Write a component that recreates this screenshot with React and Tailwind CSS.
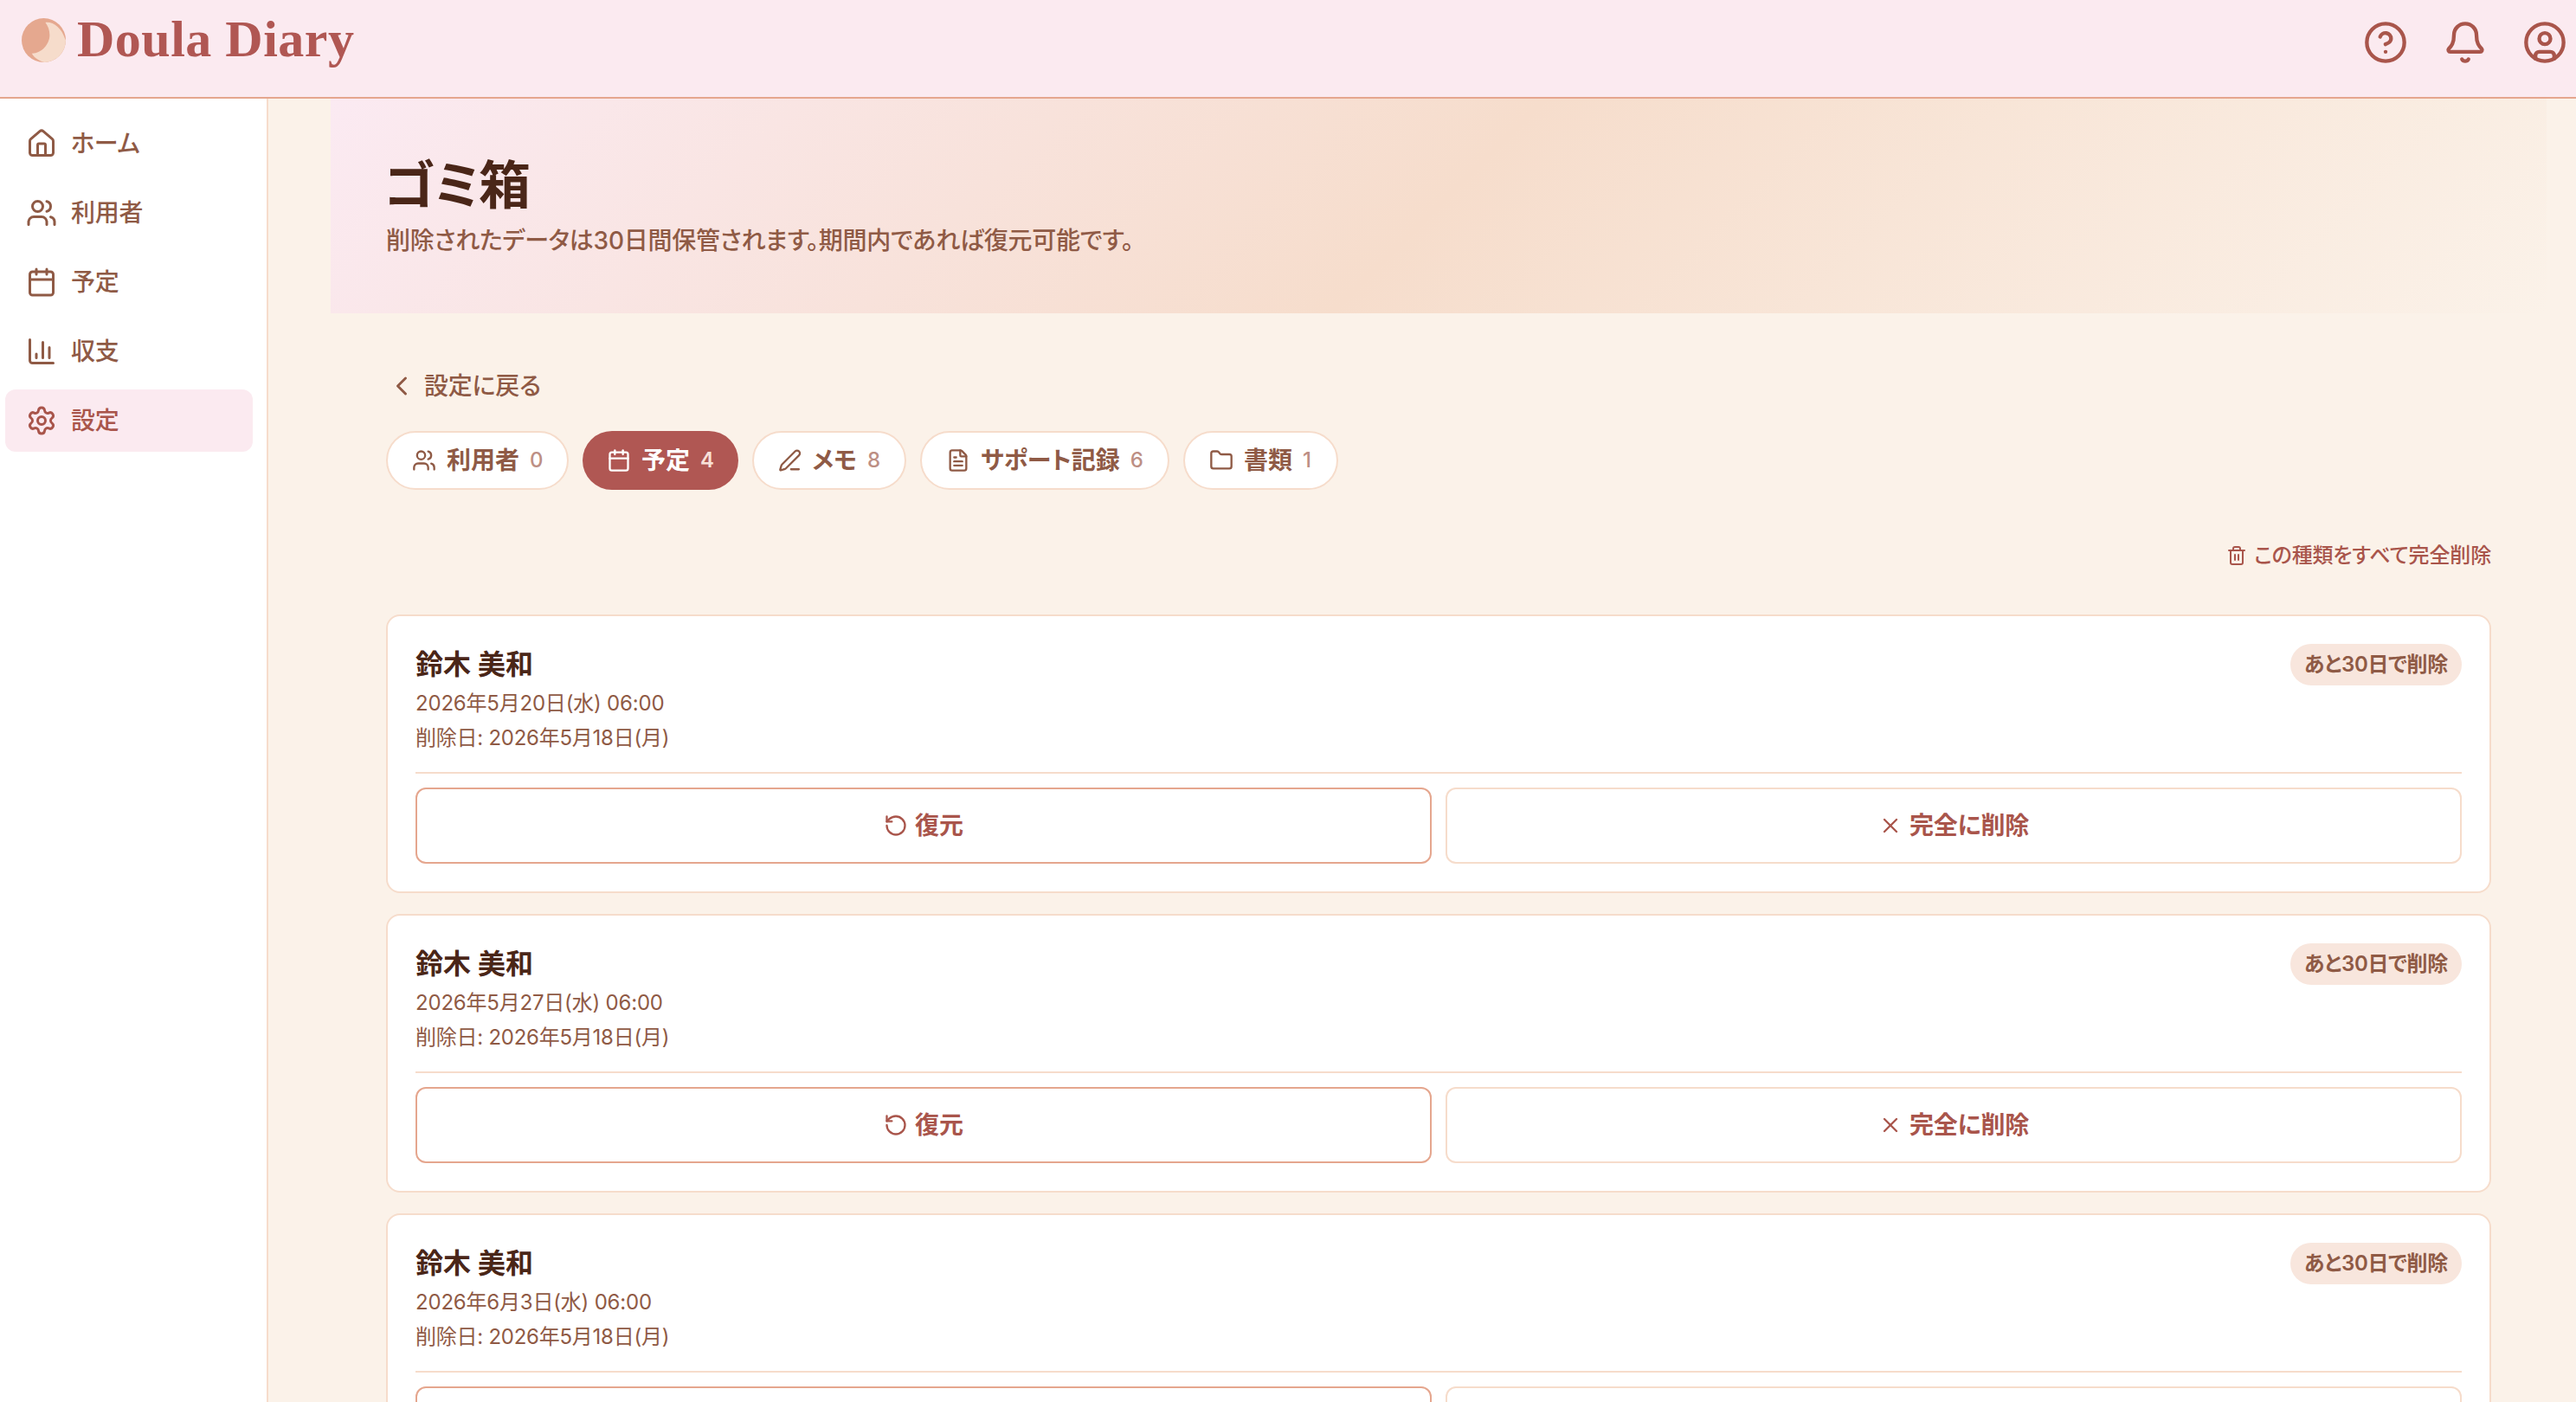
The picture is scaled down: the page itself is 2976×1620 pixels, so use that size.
import {
  Bell,
  Calendar,
  ChevronLeft,
  CircleQuestionMark,
  CircleUser,
  FileText,
  Folder,
  House,
  RotateCcw,
  Settings,
  Trash2,
  Users,
  X,
} from "lucide-react";

const navItems = [
  { label: "ホーム", icon: House },
  { label: "利用者", icon: Users },
  { label: "予定", icon: Calendar },
  { label: "収支", icon: ChartIcon },
  { label: "設定", icon: Settings, active: true },
];

const tabs = [
  { label: "利用者", count: 0, icon: Users, width: "w-[211px]" },
  { label: "予定", count: 4, icon: Calendar, width: "w-[180px]", active: true },
  { label: "メモ", count: 8, icon: PenIcon, width: "w-[178px]" },
  { label: "サポート記録", count: 6, icon: FileText, width: "w-[288px]" },
  { label: "書類", count: 1, icon: Folder, width: "w-[179px]" },
];

const items = [
  { id: 1, name: "鈴木 美和", date: "2026年5月20日(水) 06:00", deletedAt: "2026年5月18日(月)" },
  { id: 2, name: "鈴木 美和", date: "2026年5月27日(水) 06:00", deletedAt: "2026年5月18日(月)" },
  { id: 3, name: "鈴木 美和", date: "2026年6月3日(水) 06:00", deletedAt: "2026年5月18日(月)" },
];

function ChartIcon({ size }) {
  return (
    <svg width={size} height={size} viewBox="0 0 24 24" fill="none" stroke="currentColor" strokeWidth="2" strokeLinecap="round" strokeLinejoin="round">
      <path d="M3 3v16a2 2 0 0 0 2 2h16" />
      <path d="M8 17v-3M13 17V5M18 17V9" />
    </svg>
  );
}

function PenIcon({ size }) {
  return (
    <svg width={size} height={size} viewBox="0 0 24 24" fill="none" stroke="currentColor" strokeWidth="2" strokeLinecap="round" strokeLinejoin="round">
      <path d="M13 21h8" />
      <path d="M21.174 6.812a1 1 0 0 0-3.986-3.987L3.842 16.174a2 2 0 0 0-.5.83l-1.321 4.352a.5.5 0 0 0 .623.622l4.353-1.32a2 2 0 0 0 .83-.497z" />
    </svg>
  );
}

function Logo() {
  return (
    <svg width="51" height="51" viewBox="0 0 52 52">
      <circle cx="26" cy="26" r="26" fill="#e5a88f" />
      <path d="M28 5C38 4 47 12 51 24L52 26A26 26 0 0 1 27 52C21 50.500 15 47 12 41.500C23 42 33 31 33 20C33 14 31 9 28 5Z" fill="#f6dccb" />
    </svg>
  );
}

function Header() {
  return (
    <header className="flex h-[114px] items-start justify-between border-b-2 border-[#e5a68e] bg-[#fbeaf0] pr-[10px] pl-[25px]">
      <div className="flex items-start gap-[13px] pt-[21px]">
        <Logo />
        <span className="-mt-[10px] font-['Liberation_Serif',serif] text-[60px] leading-[68px] font-bold tracking-[0.5px] text-[#b05753]">
          Doula Diary
        </span>
      </div>
      <div className="flex gap-10 pt-[23px] text-[#a9554b]">
        <CircleQuestionMark size={52} />
        <Bell size={52} />
        <CircleUser size={52} />
      </div>
    </header>
  );
}

function Sidebar() {
  return (
    <aside className="w-[310px] shrink-0 border-r-2 border-[#f6dccb] bg-white pt-4 pr-4 pl-[6px]">
      <nav className="flex flex-col gap-2">
        {navItems.map(({ label, icon: Icon, active }) => (
          <a
            key={label}
            className={`flex h-[72px] items-center gap-4 rounded-xl px-6 text-[28px] font-medium tracking-[-0.2px] ${
              active ? "bg-[#fbeaf0] text-[#a9554b]" : "text-[#8f5a45]"
            }`}
          >
            <Icon size={36} />
            <span>{label}</span>
          </a>
        ))}
      </nav>
    </aside>
  );
}

function TrashCard({ item }) {
  return (
    <div className="h-[322px] shrink-0 rounded-2xl border-2 border-[#f6dccb] bg-white p-8">
      <div className="flex h-[148px] items-start justify-between">
        <div>
          <h3 className="mb-px text-[32px] leading-[48px] font-semibold text-[#4a2618]">{item.name}</h3>
          <p className="text-[24px] leading-[40px] tracking-[-0.2px] text-[#8f5a45]">{item.date}</p>
          <p className="text-[24px] leading-[40px] tracking-[-0.25px] text-[#8f5a45]">削除日: {item.deletedAt}</p>
        </div>
        <span className="flex h-12 items-center rounded-full bg-[#f8e6dd] px-4 text-[24px] font-semibold tracking-[-0.3px] text-[#8f5a45]">
          あと30日で削除
        </span>
      </div>
      <div className="grid grid-cols-2 gap-4 border-t-2 border-[#f6dccb] pt-4 text-[28px] font-semibold text-[#a9554b]">
        <button type="button" className="flex h-[88px] items-center justify-center gap-2 rounded-xl border-2 border-[#e5a68e]">
          <RotateCcw size={28} />
          復元
        </button>
        <button type="button" className="flex h-[88px] items-center justify-center gap-2 rounded-xl border-2 border-[#f6dccb]">
          <X size={28} />
          <span className="tracking-[-0.2px]">完全に削除</span>
        </button>
      </div>
    </div>
  );
}

export default function App() {
  return (
    <div className="flex h-[1620px] w-[2976px] flex-col overflow-hidden bg-[#fbf2e9] font-[Inter,'Noto_Sans_CJK_JP',sans-serif] [font-feature-settings:'palt']">
      <Header />
      <div className="flex min-h-0 flex-1">
        <Sidebar />
        <main className="flex-1 overflow-hidden pr-[34px] pl-[72px]">
          <section className="h-[248px] bg-linear-[135deg,#fbeaf2,#f6ddcc_50%,#fbf2e9] px-16 pt-16">
            <h1 className="-ml-[3px] text-[60px] leading-[72px] font-bold tracking-[-1.5px] text-[#4a2618]">ゴミ箱</h1>
            <p className="mt-2 text-[28px] leading-[40px] font-medium tracking-[-0.26px] text-[#8f5a45]">
              削除されたデータは30日間保管されます。期間内であれば復元可能です。
            </p>
          </section>

          <div className="flex flex-col px-16 pt-16">
            <button type="button" className="flex h-10 items-center gap-2 text-[28px] font-medium tracking-[-0.2px] text-[#8f5a45]">
              <ChevronLeft size={36} />
              設定に戻る
            </button>

            <div className="mt-8 flex gap-4">
              {tabs.map(({ label, count, icon: Icon, width, active }) => (
                <button
                  key={label}
                  type="button"
                  className={`flex h-[68px] items-center gap-3 rounded-full px-7 text-[28px] font-semibold whitespace-nowrap ${width} ${
                    active ? "bg-[#b05753] text-white" : "border-2 border-[#f6dccb] bg-white text-[#8f5a45]"
                  }`}
                >
                  <Icon size={28} className="shrink-0" />
                  <span>{label}</span>
                  <span className={`text-[24px] ${active ? "text-[#f8e0d8]" : "font-medium text-[#bd8f84]"}`}>{count}</span>
                </button>
              ))}
            </div>

            <button type="button" className="mt-14 flex h-10 items-center gap-2 self-end text-[24px] font-medium tracking-[-0.15px] text-[#a9554b]">
              <Trash2 size={24} />
              この種類をすべて完全削除
            </button>

            <div className="mt-12 flex flex-col gap-6">
              {items.map((item) => (
                <TrashCard key={item.id} item={item} />
              ))}
            </div>
          </div>
        </main>
      </div>
    </div>
  );
}
